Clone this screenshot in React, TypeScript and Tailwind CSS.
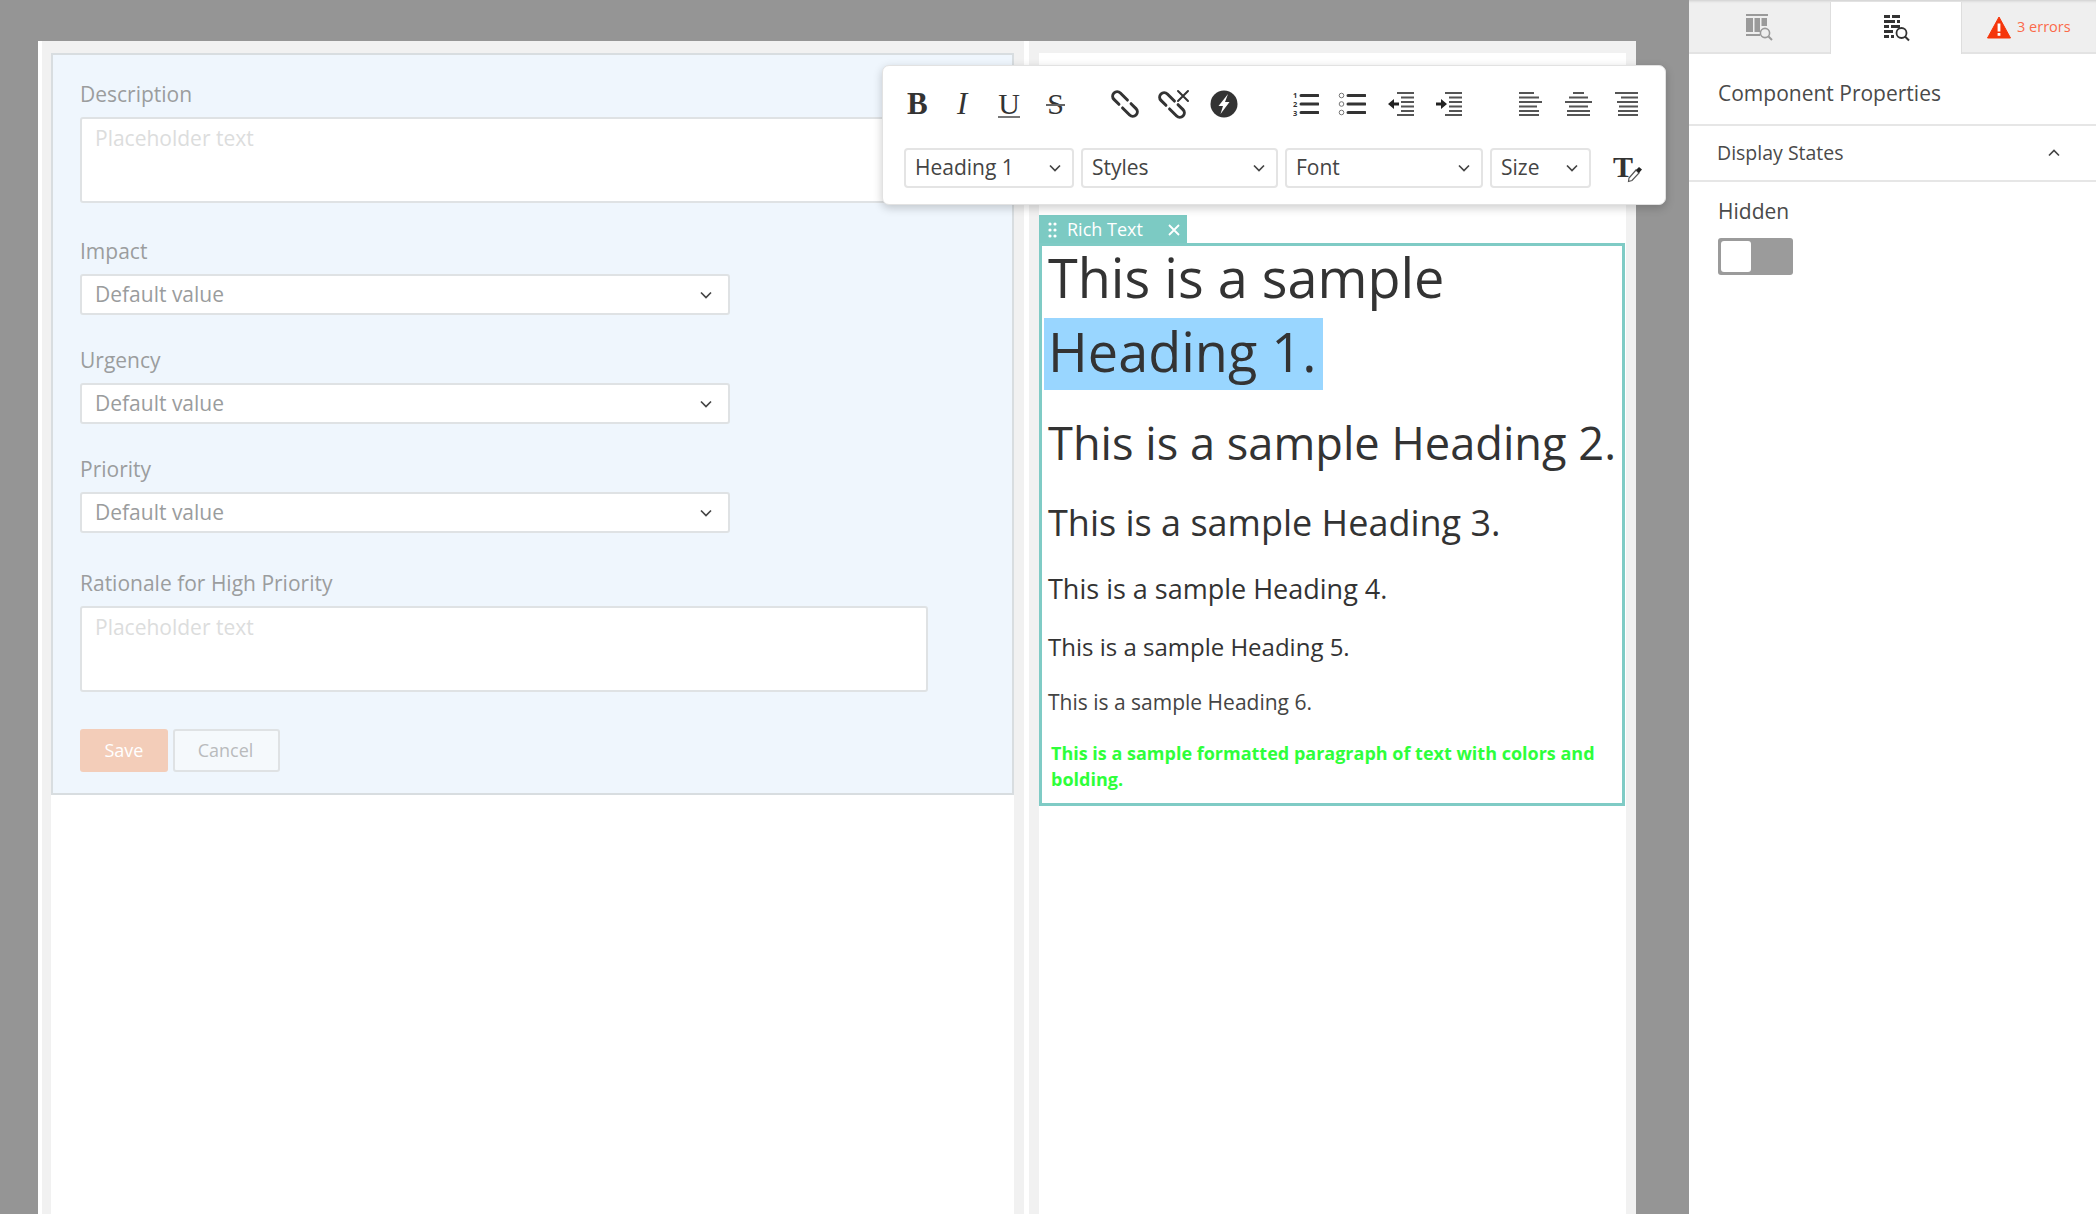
import React from "react";

const FONT = { fontFamily: '"Open Sans", "Noto Sans", sans-serif' };

function Chevron({ className = "" }: { className?: string }) {
  return (
    <svg width="12" height="8" viewBox="0 0 12 8" className={className}>
      <polyline points="1,1.5 6,6.5 11,1.5" fill="none" stroke="#444" strokeWidth="1.7" />
    </svg>
  );
}

function Label({ children }: { children: React.ReactNode }) {
  return <div className="h-[30px] leading-[30px] text-[21px] text-[#9b9d9e] mb-2">{children}</div>;
}

function TextArea({ mb = "mb-[30px]" }: { mb?: string }) {
  return (
    <div className={`w-[848px] h-[86px] bg-white border-2 border-[#dfe2e4] rounded-[3px] pl-[13px] pt-[3px] text-[21px] leading-[32px] text-[#dcdddd] ${mb}`}>
      Placeholder text
    </div>
  );
}

function FormSelect({ mb = "mb-[30px]" }: { mb?: string }) {
  return (
    <div className={`w-[650px] h-[41px] bg-white border-2 border-[#dfe2e4] rounded-[3px] pl-[13px] pr-[16px] flex items-center justify-between text-[21px] text-[#9a9c9d] ${mb}`}>
      <span>Default value</span>
      <Chevron />
    </div>
  );
}

function ToolSelect({ label, w }: { label: string; w: string }) {
  return (
    <div className={`${w} h-[40px] border-2 border-[#e4e4e4] rounded-[4px] pl-[9px] pr-[11px] flex items-center justify-between text-[21px] text-[#444] bg-white`}>
      <span>{label}</span>
      <Chevron />
    </div>
  );
}

function LinkIcon() {
  return (
    <svg width="28" height="28" viewBox="0 0 28 28" fill="none" stroke="#333" strokeWidth="3" strokeLinecap="round">
      <path d="M6 -4.5 H-4 A4.5 4.5 0 0 0 -4 4.5 H3" transform="translate(9 9) rotate(45)" />
      <path d="M6 -4.5 H-4 A4.5 4.5 0 0 0 -4 4.5 H3" transform="translate(19 19) rotate(225)" />
    </svg>
  );
}

function UnlinkIcon() {
  return (
    <svg width="32" height="30" viewBox="0 0 32 30" fill="none" stroke="#333" strokeWidth="3" strokeLinecap="round">
      <path d="M6 -4.5 H-4 A4.5 4.5 0 0 0 -4 4.5 H3" transform="translate(9 11) rotate(45)" />
      <path d="M6 -4.5 H-4 A4.5 4.5 0 0 0 -4 4.5 H3" transform="translate(19 21) rotate(225)" />
      <path d="M20 2 L30 12 M30 2 L20 12" strokeWidth="2" />
    </svg>
  );
}

function BoltIcon() {
  return (
    <svg width="28" height="28" viewBox="0 0 28 28">
      <circle cx="14" cy="14" r="13.5" fill="#333" />
      <path d="M18 4 L8.5 16 H13 L10.5 24 L19.5 12 H15 Z" fill="#fff" />
    </svg>
  );
}

function NumberedIcon() {
  return (
    <svg width="26" height="26" viewBox="0 0 26 26">
      <text x="0" y="7" fontSize="7.5" fill="#333" fontFamily="Open Sans" fontWeight="700">1</text>
      <text x="0" y="16" fontSize="7.5" fill="#333" fontFamily="Open Sans" fontWeight="700">2</text>
      <text x="0" y="25" fontSize="7.5" fill="#333" fontFamily="Open Sans" fontWeight="700">3</text>
      <path d="M8 4.5 H25 M8 13 H25 M8 21.5 H25" stroke="#333" strokeWidth="3" strokeLinecap="round" />
    </svg>
  );
}

function BulletIcon() {
  return (
    <svg width="28" height="26" viewBox="0 0 28 26" fill="none">
      <circle cx="3.5" cy="4.5" r="2.3" stroke="#777" strokeWidth="1" />
      <circle cx="3.5" cy="13" r="2.3" stroke="#777" strokeWidth="1" />
      <circle cx="3.5" cy="21.5" r="2.3" stroke="#777" strokeWidth="1" />
      <path d="M10 4.5 H27 M10 13 H27 M10 21.5 H27" stroke="#333" strokeWidth="3" strokeLinecap="round" />
    </svg>
  );
}

function IndentIcon({ out }: { out?: boolean }) {
  return (
    <svg width="28" height="26" viewBox="0 0 28 26">
      <path d="M10 2 H27 M14 6.5 H27 M14 11 H27 M14 15.5 H27 M14 20 H27 M10 24 H27" stroke="#555" strokeWidth="2" />
      {out ? (
        <path d="M1 13 L7 8 V11.5 H12 V14.5 H7 V18 Z" fill="#222" />
      ) : (
        <path d="M12 13 L6 8 V11.5 H1 V14.5 H6 V18 Z" fill="#222" />
      )}
    </svg>
  );
}

function AlignIcon({ kind }: { kind: "l" | "c" | "r" }) {
  const d =
    kind === "l"
      ? "M0 2 H15 M0 6.5 H20 M0 11 H23 M0 15.5 H18 M0 20 H20 M0 24 H20"
      : kind === "c"
      ? "M8 2 H19 M4 6.5 H23 M0 11 H27 M4 15.5 H23 M2 20 H25 M2 24 H25"
      : "M0 2 H23 M6 6.5 H23 M2 11 H23 M4 15.5 H23 M3 20 H23 M3 24 H23";
  return (
    <svg width={kind === "c" ? 27 : 23} height="26" viewBox={`0 0 ${kind === "c" ? 27 : 23} 26`}>
      <path d={d} stroke="#555" strokeWidth="2" />
    </svg>
  );
}

function Glyph({ children, className = "" }: { children: React.ReactNode; className?: string }) {
  return (
    <span className={`leading-[28px] text-[#333] ${className}`} style={{ fontFamily: '"Liberation Serif", serif' }}>
      {children}
    </span>
  );
}

function Toolbar() {
  return (
    <div className="absolute left-[844px] top-[24px] w-[784px] h-[140px] bg-white rounded-[7px] border border-[#e2e2e2] shadow-[0_3px_10px_rgba(0,0,0,0.2)]">
      <div className="absolute left-[24px] top-[24px] h-[28px] flex items-center">
        <Glyph className="text-[31px] font-bold w-[22px]">B</Glyph>
        <Glyph className="text-[31px] italic w-[14px] ml-[28px]">I</Glyph>
        <span className="ml-[27px] w-[22px] h-[28px] border-b-2 border-[#777] flex justify-center">
          <Glyph className="text-[30px]">U</Glyph>
        </span>
        <span className="relative ml-[27px] w-[17px] h-[28px] flex justify-center">
          <Glyph className="text-[30px]">S</Glyph>
          <span className="absolute left-[-1px] right-[-1px] top-[14px] h-[1.5px] bg-[#666]" />
        </span>
        <span className="ml-[47px] flex"><LinkIcon /></span>
        <span className="ml-[19px] flex"><UnlinkIcon /></span>
        <span className="ml-[20px] flex"><BoltIcon /></span>
        <span className="ml-[55px] flex"><NumberedIcon /></span>
        <span className="ml-[19px] flex"><BulletIcon /></span>
        <span className="ml-[21px] flex"><IndentIcon out /></span>
        <span className="ml-[20px] flex"><IndentIcon /></span>
        <span className="ml-[56px] flex"><AlignIcon kind="l" /></span>
        <span className="ml-[23px] flex"><AlignIcon kind="c" /></span>
        <span className="ml-[23px] flex"><AlignIcon kind="r" /></span>
      </div>
      <div className="absolute left-[21px] top-[82px] flex gap-[7px] items-center">
        <ToolSelect label="Heading 1" w="w-[170px]" />
        <ToolSelect label="Styles" w="w-[197px]" />
        <ToolSelect label="Font" w="w-[198px]" />
        <ToolSelect label="Size" w="w-[101px]" />
        <span className="relative ml-[15px] w-[30px] h-[30px]">
          <Glyph className="text-[30px] font-bold">T</Glyph>
          <svg width="16" height="18" viewBox="0 0 16 18" className="absolute left-[14px] top-[12px]">
            <path d="M1.5 16.5 L2 13 L9 5 L12 8 L5 15.5 Z" fill="#fff" stroke="#555" strokeWidth="1.2" />
            <path d="M9 5 L12 2 L15 4.5 L12 8 Z" fill="#222" />
          </svg>
        </span>
      </div>
    </div>
  );
}

function TabColumnsIcon() {
  return (
    <svg width="28" height="28" viewBox="0 0 28 28" fill="none">
      <path d="M0 2 H22 M0 22 H14" stroke="#9a9a9a" strokeWidth="2" />
      <path d="M0 5 H7 V19 H0 Z M8.5 5 H14 V19 H8.5 Z M15.5 5 H21 V13 H15.5 Z" fill="#9a9a9a" />
      <circle cx="19" cy="20" r="4.6" stroke="#9a9a9a" strokeWidth="1.6" />
      <path d="M22.5 23.5 L26 27" stroke="#9a9a9a" strokeWidth="2" />
    </svg>
  );
}

function TabBricksIcon() {
  return (
    <svg width="28" height="28" viewBox="0 0 28 28" fill="none">
      <path d="M0 1 H6 V4 H0 Z M8 1 H16 V4 H8 Z M0 6 H11 V9 H0 Z M13 6 H16 V9 H13 Z M0 11 H5 V14 H0 Z M7 11 H16 V14 H7 Z M0 16 H9 V19 H0 Z M0 21 H5 V24 H0 Z M7 21 H10 V24 H7 Z" fill="#333" />
      <circle cx="17.5" cy="19" r="5" fill="#fff" stroke="#333" strokeWidth="1.8" />
      <path d="M21 22.5 L25 26.5" stroke="#333" strokeWidth="2" />
    </svg>
  );
}

function Sidebar() {
  return (
    <div className="w-[407px] h-full bg-white flex flex-col text-[#4a4a4a]">
      <div className="h-[54px] pt-[2px] flex bg-[#efefef] border-b-2 border-[#e3e3e3] shadow-[inset_0_3px_3px_-2px_rgba(0,0,0,0.15)]">
        <div className="w-[141px] flex items-center justify-center"><TabColumnsIcon /></div>
        <div className="w-[132px] h-[52px] bg-white border-l border-r border-[#dedede] flex items-center justify-center pl-[3px]"><TabBricksIcon /></div>
        <div className="flex-1 flex items-center pl-[25px] gap-[6px]">
          <svg width="24" height="23" viewBox="0 0 24 23">
            <path d="M12 1 L23.5 22 H0.5 Z" fill="#f5360b" stroke="#f5360b" strokeLinejoin="round" />
            <rect x="10.6" y="7.5" width="2.8" height="8" fill="#fff" />
            <rect x="10.6" y="17" width="2.8" height="2.8" fill="#fff" />
          </svg>
          <span className="text-[14.5px] text-[#fb6a4a]">3 errors</span>
        </div>
      </div>
      <div className="h-[72px] pl-[29px] pt-[9px] flex items-center text-[21px] border-b-2 border-[#e6e6e6]">Component Properties</div>
      <div className="h-[56px] pl-[28px] pr-[36px] flex items-center justify-between text-[19.5px] border-b-2 border-[#e6e6e6]">
        <span>Display States</span>
        <svg width="12" height="8" viewBox="0 0 12 8"><polyline points="1,6.5 6,1.5 11,6.5" fill="none" stroke="#444" strokeWidth="1.7" /></svg>
      </div>
      <div className="pl-[29px] pt-[14px]">
        <div className="text-[21px] leading-[30px]">Hidden</div>
        <div className="mt-[12px] w-[75px] h-[37px] bg-[#9b9b9b] rounded-[3px] p-[3px]">
          <div className="w-[30px] h-[31px] bg-white rounded-[3px]" />
        </div>
      </div>
    </div>
  );
}

export default function App() {
  return (
    <div className="w-[2096px] h-[1214px] flex overflow-hidden bg-[#959595]" style={FONT}>
      <div className="w-[1689px] h-full pt-[41px] pl-[38px] pr-[53px]">
        <div className="relative h-full bg-white flex pl-[4px]">
          <div className="w-[982px] h-full bg-[#f1f1f1] pt-[12px] pl-[9px] pr-[10px]">
            <div className="h-full bg-white">
              <div className="h-[742px] bg-[#eff6fd] border-2 border-[#d8dde0] pl-[27px] pt-[24px]">
                <Label>Description</Label>
                <TextArea mb="mb-[33px]" />
                <Label>Impact</Label>
                <FormSelect />
                <Label>Urgency</Label>
                <FormSelect />
                <Label>Priority</Label>
                <FormSelect mb="mb-[35px]" />
                <Label>Rationale for High Priority</Label>
                <TextArea mb="mb-[37px]" />
                <div className="flex gap-[5px] text-[18px]">
                  <div className="w-[88px] h-[43px] bg-[#f3cdb9] rounded-[3px] flex items-center justify-center text-white">Save</div>
                  <div className="w-[107px] h-[43px] bg-[#f5f9fc] border-2 border-[#dfe2e4] rounded-[3px] flex items-center justify-center text-[#b9bbbc] pr-[2px]">Cancel</div>
                </div>
              </div>
            </div>
          </div>
          <div className="w-[5px]" />
          <div className="flex-1 h-full bg-[#f1f1f1] pt-[12px] px-[10px]">
            <div className="h-full bg-white pt-[162px]">
              <div className="w-[148px] h-[28px] pt-[1px] bg-[#7ccac3] flex items-center pl-[9px] text-white text-[18px]">
                <svg width="10" height="18" viewBox="0 0 10 18" fill="#fff">
                  <circle cx="2" cy="3" r="1.6" /><circle cx="7" cy="3" r="1.6" />
                  <circle cx="2" cy="9" r="1.6" /><circle cx="7" cy="9" r="1.6" />
                  <circle cx="2" cy="15" r="1.6" /><circle cx="7" cy="15" r="1.6" />
                </svg>
                <span className="ml-[9px]">Rich Text</span>
                <svg width="12" height="12" viewBox="0 0 12 12" className="ml-[25px]">
                  <path d="M1 1 L11 11 M11 1 L1 11" stroke="#fff" strokeWidth="1.8" />
                </svg>
              </div>
              <div className="w-[586px] h-[563px] border-[3px] border-[#7fcbc5] text-[#333] pl-[6px]">
                <div className="text-[54px] h-[73px] leading-[65px] -mt-[1px]">This is a sample</div>
                <div className="text-[54px] h-[72px] leading-[66px]">
                  <span className="inline-block h-[72px] bg-[#99d6ff] -ml-[4px] pl-[4px] pr-[7px]">Heading 1.</span>
                </div>
                <div className="text-[45.2px] leading-[60px] mt-[23px] whitespace-nowrap">This is a sample Heading 2.</div>
                <div className="text-[36px] leading-[48px] mt-[26px] whitespace-nowrap">This is a sample Heading 3.</div>
                <div className="text-[27px] leading-[36px] mt-[24px] whitespace-nowrap">This is a sample Heading 4.</div>
                <div className="text-[24px] leading-[32px] mt-[24px] whitespace-nowrap">This is a sample Heading 5.</div>
                <div className="text-[21px] leading-[28px] mt-[25px] text-[#444] whitespace-nowrap">This is a sample Heading 6.</div>
                <div className="text-[18px] leading-[26px] font-bold text-[#2eff3a] mt-[24px] pl-[3px] pr-[10px]">
                  This is a sample formatted paragraph of text with colors and bolding.
                </div>
              </div>
            </div>
          </div>
          <Toolbar />
        </div>
      </div>
      <Sidebar />
    </div>
  );
}
